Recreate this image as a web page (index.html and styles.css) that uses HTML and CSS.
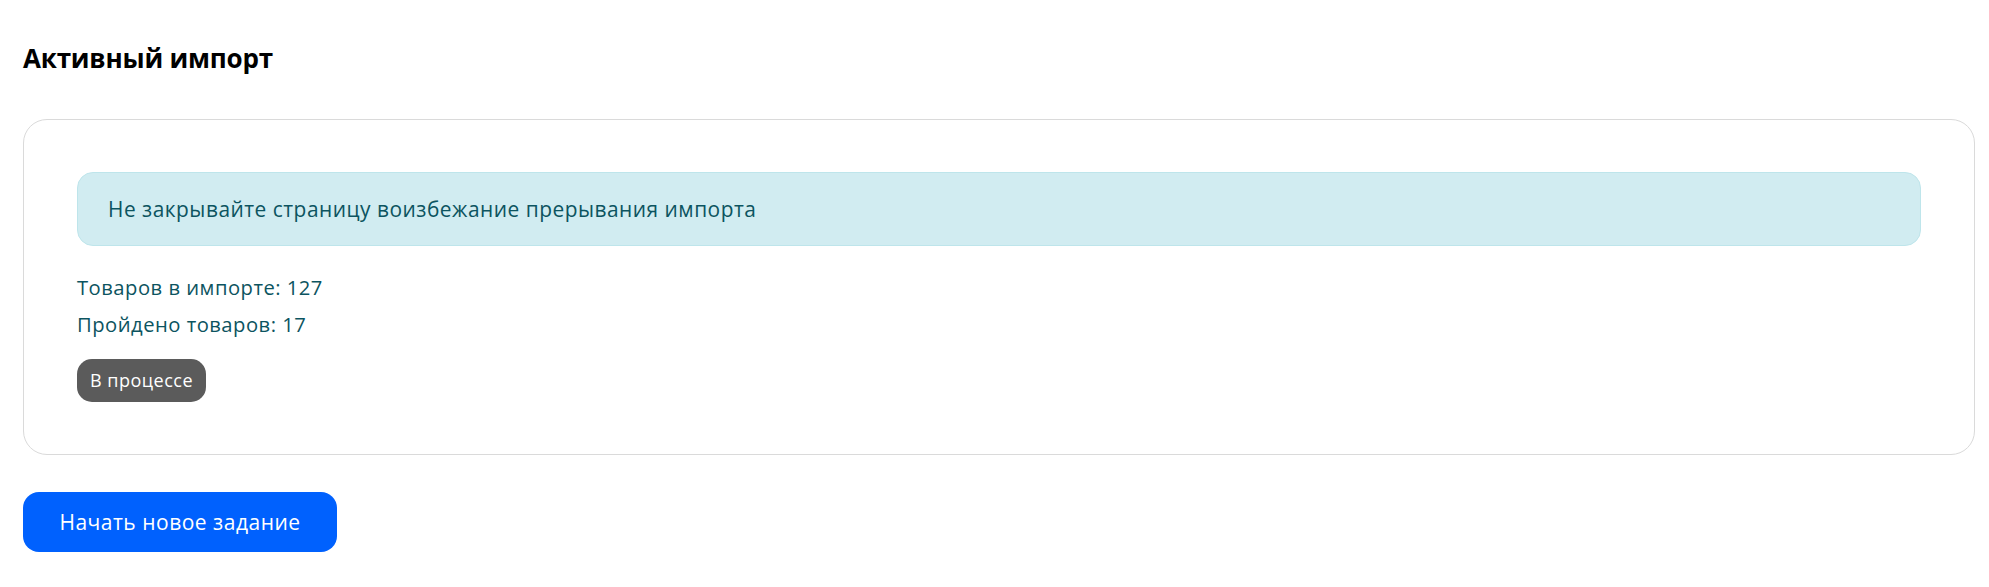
FILE: index.html
```html
<!DOCTYPE html>
<html lang="ru">
<head>
<meta charset="utf-8">
<title>Активный импорт</title>
<link rel="stylesheet" href="styles.css">
</head>
<body>
<div class="page">
  <h2 class="title">Активный импорт</h2>
  <div class="card">
    <div class="alert">Не закрывайте страницу воизбежание прерывания импорта</div>
    <div class="stats">
      <p class="stat">Товаров в импорте: 127</p>
      <p class="stat">Пройдено товаров: 17</p>
    </div>
    <span class="badge">В процессе</span>
  </div>
  <button class="btn" type="button">Начать новое задание</button>
</div>
</body>
</html>
```

FILE: styles.css
```css
html, body {
  margin: 0;
  padding: 0;
  background: #ffffff;
}

body {
  font-family: "Open Sans", "Noto Sans", sans-serif;
  color: #212529;
}

.page {
  padding: 42px 14px 0 23px;
}

.title {
  margin: 0 0 45px;
  font-size: 26px;
  line-height: 32px;
  font-weight: 700;
  color: #000;
  letter-spacing: -0.2px;
}

.card {
  border: 1px solid #dadada;
  border-radius: 24px;
  padding: 52px 53px 52px 53px;
}

.alert {
  background: #d1ecf1;
  border: 1px solid #bee5eb;
  border-radius: 16px;
  color: #0c5460;
  font-size: 20.9px;
  letter-spacing: 0.5px;
  line-height: 24px;
  padding: 24px 30px;
}

.stats {
  margin-top: 23px;
}

.stat {
  margin: 0;
  font-size: 20.2px;
  letter-spacing: 0.5px;
  line-height: 37px;
  color: #0c5460;
}

.badge {
  display: inline-block;
  margin-top: 16px;
  background: #5b5b5b;
  color: #fff;
  font-size: 18px;
  letter-spacing: 0.5px;
  line-height: 43px;
  height: 43px;
  padding: 0 13px;
  border-radius: 15px;
}

.btn {
  display: block;
  margin-top: 37px;
  width: 314px;
  height: 60px;
  border: 0;
  border-radius: 16px;
  background: #0061fe;
  color: #fff;
  font-family: inherit;
  font-size: 21px;
  letter-spacing: 0.5px;
  cursor: pointer;
}
```
